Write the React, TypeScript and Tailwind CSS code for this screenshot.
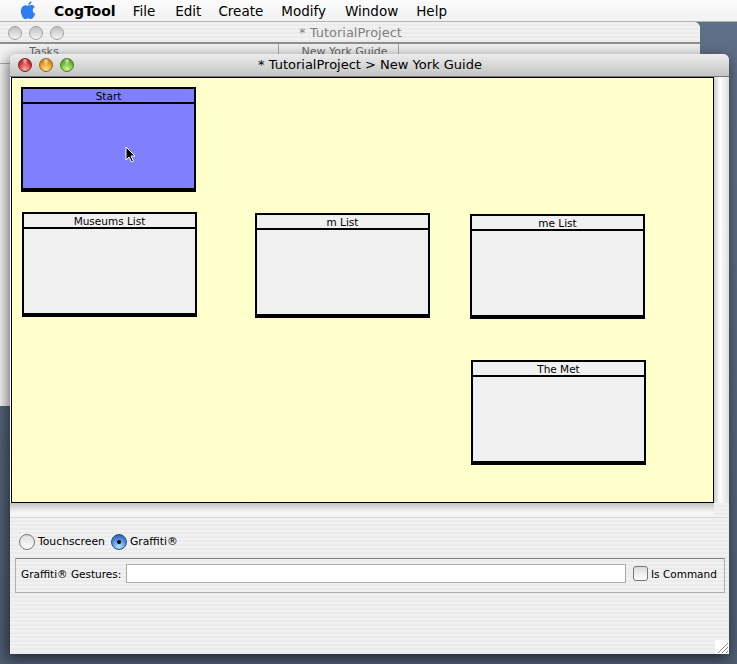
import React from "react";

const stripes = "bg-[repeating-linear-gradient(180deg,#f1f1f1_0px,#f1f1f1_2px,#ebebeb_2px,#ebebeb_4px)]";

function Light({ color }: { color: "red" | "amber" | "green" | "off" }) {
  const fill = {
    red: "bg-[radial-gradient(ellipse_at_50%_12%,rgba(255,255,255,0.75),transparent_35%),radial-gradient(circle_at_50%_85%,#f9b0a8,#d03034_60%,#96181c)] border-[#7c2226]",
    amber: "bg-[radial-gradient(ellipse_at_50%_12%,rgba(255,255,255,0.75),transparent_35%),radial-gradient(circle_at_50%_85%,#fde090,#ea9414_60%,#a86408)] border-[#8a6420]",
    green: "bg-[radial-gradient(ellipse_at_50%_12%,rgba(255,255,255,0.75),transparent_35%),radial-gradient(circle_at_50%_85%,#d0f49c,#68b62c_60%,#3c7c14)] border-[#4c7a28]",
    off: "bg-[linear-gradient(180deg,#c0c0c0,#f4f4f4)] border-[#a0a0a0]",
  }[color];
  return <span className={`block h-[14px] w-[14px] rounded-full border ${fill}`} />;
}

function Frame({ name, cls, selected }: { name: string; cls: string; selected?: boolean }) {
  return (
    <div
      className={`absolute flex h-[105px] w-[175px] flex-col border-2 border-b-4 border-black ${cls} ${
        selected ? "bg-[#8080ff]" : "bg-[#f0f0f0]"
      }`}
    >
      <div className="box-content h-[13px] shrink-0 border-b-2 border-black text-center text-[10.5px] leading-[15px] text-black">
        {name}
      </div>
    </div>
  );
}

function Radio({ on }: { on?: boolean }) {
  return (
    <span
      className={`flex h-[16px] w-[16px] items-center justify-center rounded-full border ${
        on
          ? "border-[#2c4c80] bg-[radial-gradient(circle_at_50%_85%,#b4e4fc,#4a86dc_60%,#24508c)]"
          : "border-[#777] bg-[linear-gradient(180deg,#dcdcdc,#ffffff)]"
      }`}
    >
      {on && <span className="block h-[4px] w-[4px] rounded-full bg-black" />}
    </span>
  );
}

export default function App() {
  return (
    <div
      className="relative h-[664px] w-[737px] overflow-hidden bg-[linear-gradient(180deg,#5f6f86,#4d5c72)] text-black"
      style={{ fontFamily: '"DejaVu Sans", sans-serif' }}
    >
      {/* menu bar */}
      <div className="absolute inset-x-0 top-0 z-30 flex h-[22px] items-center whitespace-nowrap border-b border-[#b4b4b4] bg-[linear-gradient(180deg,#fbfbfb,#f2f2f2)] text-[13.5px] leading-[22px]">
        <svg viewBox="0 0 16 20" className="ml-[20px] h-[19px] w-[16px]">
          <path
            d="M11.6 0.5c.1 1.6-1.3 3.6-3.3 3.6C8.1 2.4 9.7.6 11.6.5zM8.3 5c1 0 1.8-.7 3.3-.7 1.2 0 2.6.6 3.5 1.9-3 1.7-2.6 6 .6 7.3-.9 2.3-2.7 5.5-4.5 5.500-1.100 0-1.600-.7-3-.7s-1.900.7-3 .7C3 19 .5 14.500.5 11c0-3.600 2.300-6.600 5-6.600 1.200 0 2 .6 2.800.6z"
            fill="#2f7df0"
          />
        </svg>
        <span className="ml-[18px] text-[14px] font-bold">CogTool</span>
        <span className="ml-[17px]">File</span>
        <span className="ml-[20px]">Edit</span>
        <span className="ml-[17px]">Create</span>
        <span className="ml-[18px]">Modify</span>
        <span className="ml-[19px]">Window</span>
        <span className="ml-[18px]">Help</span>
      </div>

      {/* back window */}
      <div className="absolute left-0 top-[22px] z-10 h-[384px] w-[700px] rounded-tr-[6px] bg-[linear-gradient(90deg,#f4f4f4,#eeeeee_10%)]">
        <div className={`relative flex h-[22px] items-center gap-[7px] rounded-tr-[6px] border-b-2 border-[#8e8e8e] pl-[8px] pt-[1px] ${stripes}`}>
          <Light color="off" />
          <Light color="off" />
          <Light color="off" />
          <span className="absolute inset-x-0 left-[1px] top-0 text-center text-[13px] leading-[22px] text-[#808080]">
            * TutorialProject
          </span>
        </div>
        <div className="flex h-[20px] whitespace-nowrap border-b border-[#aaa] text-center text-[11px] leading-[16px] text-[#666]">
          <div className="w-[279px] border-r border-[#aaa] pr-[190px]">Tasks</div>
          <div className="w-[120px] border-r border-[#aaa] pl-[12px]">New York Guide</div>
        </div>
      </div>

      {/* front window */}
      <div className="absolute left-[10px] top-[54px] z-20 flex h-[600px] w-[719px] flex-col overflow-hidden rounded-t-[6px] bg-[#eeeeee] shadow-[-2px_4px_14px_rgba(0,0,0,0.6)]">
        <div className="relative flex h-[23px] shrink-0 items-center gap-[7px] border-b border-[#777] bg-[linear-gradient(180deg,#ececec,#c4c4c4)] pl-[8px]">
          <Light color="red" />
          <Light color="amber" />
          <Light color="green" />
          <span className="absolute inset-x-0 left-[1px] top-0 text-center text-[13px] leading-[22px]">
            * TutorialProject &gt; New York Guide
          </span>
        </div>

        <div className="flex h-[426px] shrink-0 bg-[linear-gradient(90deg,#fff,#ddd)]">
          <div className="relative ml-px h-full w-[703px] border border-black bg-[#ffffcc]">
            <Frame name="Start" cls="left-[9px] top-[9px]" selected />
            <Frame name="Museums List" cls="left-[10px] top-[134px]" />
            <Frame name="m List" cls="left-[243px] top-[135px]" />
            <Frame name="me List" cls="left-[458px] top-[136px]" />
            <Frame name="The Met" cls="left-[459px] top-[282px]" />
            {/* pointer */}
            <svg viewBox="0 0 12 18" className="absolute left-[113px] top-[68px] h-[18px] w-[12px]">
              <path d="M1 1v13l3-3 2.500 5 2-1-2.500-5H10z" fill="#000" stroke="#fff" strokeWidth="1" />
            </svg>
          </div>
          <div className="w-[15px] bg-[linear-gradient(90deg,#cccccc,#ffffff_40%,#dedede)]" />
        </div>

        <div className="flex h-[15px] shrink-0 border-b border-[#d8d8d8] bg-[linear-gradient(180deg,#c4c4c4,#f8f8f8_70%,#f2f2f2)]">
          <div className={`ml-auto w-[15px] ${stripes}`} />
        </div>

        <div className={`relative flex-1 px-[5px] pt-[15px] ${stripes}`}>
          <div className="ml-[4px] flex h-[18px] items-center whitespace-nowrap text-[10.8px] leading-[20px]">
            <Radio />
            <span className="ml-[3px]">Touchscreen</span>
            <span className="ml-[6px]"><Radio on /></span>
            <span className="ml-[3px]">Graffiti®</span>
          </div>
          <div className="mt-[7px] flex h-[35px] w-[710px] items-start whitespace-nowrap border border-[#b0b0b0] border-t-[#808080] pl-[5px] pt-[5px] text-[10.5px]">
            <span className="w-[100px] leading-[20px]">Graffiti® Gestures:</span>
            <div className="ml-[5px] h-[19px] w-[500px] border border-[#aaa] bg-white" />
            <span className="ml-[7px] mt-[2px] h-[15px] w-[15px] rounded-[3px] border border-[#777] bg-[linear-gradient(180deg,#dcdcdc,#fff)]" />
            <span className="ml-[3px] leading-[20px]">Is Command</span>
          </div>
          <svg viewBox="0 0 14 14" className="absolute bottom-0 right-0 h-[14px] w-[14px] bg-white">
            <path d="M3 13L13 3M7 13l6-6M11 13l2-2" stroke="#888" strokeWidth="1" />
          </svg>
        </div>
      </div>
    </div>
  );
}
